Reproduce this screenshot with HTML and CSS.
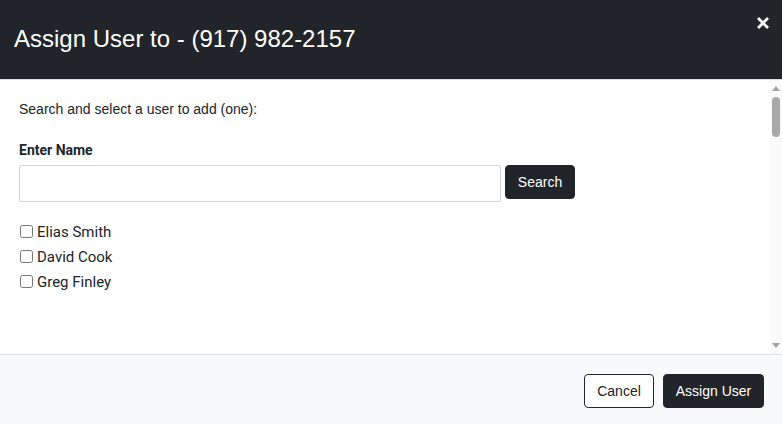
FILE: index.html
```html
<!DOCTYPE html>
<html>
<head>
<meta charset="utf-8">
<link rel="stylesheet" href="styles.css">
</head>
<body>
<div class="modal">
  <header class="modal-header">
    <h1 class="modal-title">Assign User to - (917) 982-2157</h1>
    <button class="close-btn" aria-label="Close">
      <svg width="12" height="12" viewBox="0 0 12 12"><path d="M2 2 L10 10 M10 2 L2 10" stroke="#fff" stroke-width="2.8" stroke-linecap="square"/></svg>
    </button>
  </header>
  <div class="modal-body">
    <div class="content">
      <p class="intro">Search and select a user to add (one):</p>
      <label class="field-label">Enter Name</label>
      <div class="search-row">
        <input class="name-input" type="text">
        <button class="btn btn-dark btn-search">Search</button>
      </div>
      <ul class="user-list">
        <li><label><input type="checkbox"><span>Elias Smith</span></label></li>
        <li><label><input type="checkbox"><span>David Cook</span></label></li>
        <li><label><input type="checkbox"><span>Greg Finley</span></label></li>
      </ul>
    </div>
    <div class="scrollbar">
      <div class="arrow-up"></div>
      <div class="thumb"></div>
      <div class="track"></div>
      <div class="arrow-down"></div>
    </div>
  </div>
  <footer class="modal-footer">
    <button class="btn btn-outline">Cancel</button>
    <button class="btn btn-dark btn-assign">Assign User</button>
  </footer>
</div>
</body>
</html>
```

FILE: styles.css
```css
* { box-sizing: border-box; }
html, body { margin: 0; padding: 0; }
body {
  width: 782px;
  height: 424px;
  overflow: hidden;
  font-family: "Liberation Sans", Arial, sans-serif;
  color: #212529;
  background: #fff;
}
.modal {
  display: flex;
  flex-direction: column;
  height: 424px;
}
.modal-header {
  height: 80px;
  background: #212529;
  border-bottom: 1px solid #dee2e6;
  display: flex;
  align-items: flex-start;
  justify-content: space-between;
  padding: 0 13px 0 14px;
}
.modal-title {
  margin: 0;
  padding-top: 25px;
  font-size: 24px;
  font-weight: 400;
  line-height: 28px;
  color: #fff;
}
.close-btn {
  margin-top: 17px;
  padding: 0;
  border: 0;
  background: none;
  width: 12px;
  height: 12px;
  display: flex;
}
.modal-body {
  flex: 1;
  display: flex;
  min-height: 0;
}
.content {
  flex: 1;
  padding: 0 19px;
}
.intro {
  margin: 21px 0 0;
  font-size: 14px;
  line-height: 16px;
}
.field-label {
  display: block;
  margin-top: 25px;
  font-family: Roboto, "Liberation Sans", sans-serif;
  font-weight: 700;
  font-size: 14px;
  line-height: 16px;
}
.search-row {
  display: flex;
  align-items: flex-start;
  gap: 4px;
  margin-top: 7px;
}
.name-input {
  width: 482px;
  height: 37px;
  border: 1px solid #ced4da;
  border-radius: 2px;
  margin: 0;
  padding: 0 8px;
  font-size: 14px;
}
.btn {
  font-family: "Liberation Sans", Arial, sans-serif;
  border-radius: 4px;
  cursor: pointer;
  padding: 0;
}
.btn-dark {
  background: #212529;
  border: 1px solid #212529;
  color: #fff;
}
.btn-search {
  width: 70px;
  height: 34px;
  font-size: 14px;
}
.user-list {
  list-style: none;
  margin: 17px 0 0;
  padding: 0;
  font-family: Roboto, "Liberation Sans", sans-serif;
  font-size: 15px;
}
.user-list li {
  height: 25px;
  display: flex;
  align-items: center;
}
.user-list label {
  display: flex;
  align-items: center;
}
.user-list input {
  width: 13px;
  height: 13px;
  margin: 0 4px 0 1px;
}
.scrollbar {
  width: 12px;
  display: flex;
  flex-direction: column;
  align-items: center;
  background: #fafafa;
  padding: 6px 0 6px;
}
.arrow-up {
  width: 0; height: 0;
  border-left: 4px solid transparent;
  border-right: 4px solid transparent;
  border-bottom: 5px solid #a3a3a3;
}
.thumb {
  margin-top: 6px;
  width: 8px;
  height: 40px;
  border-radius: 4px;
  background: #a8a8a8;
}
.track { flex: 1; }
.arrow-down {
  width: 0; height: 0;
  border-left: 4px solid transparent;
  border-right: 4px solid transparent;
  border-top: 5px solid #a3a3a3;
}
.modal-footer {
  height: 70px;
  background: #f8f9fa;
  border-top: 1px solid #dee2e6;
  display: flex;
  align-items: flex-start;
  justify-content: flex-end;
  gap: 9px;
  padding: 19px 18px 0 0;
}
.btn-outline {
  width: 70px;
  height: 34px;
  background: #fff;
  border: 1px solid #212529;
  color: #212529;
  font-size: 14px;
}
.btn-assign {
  width: 101px;
  height: 34px;
  font-size: 14px;
}
```
